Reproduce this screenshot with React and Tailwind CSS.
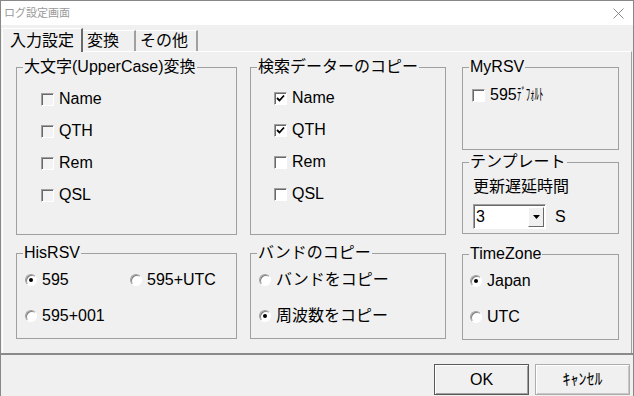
import React from 'react'

const font = { fontFamily: '"Liberation Sans", "Noto Sans CJK JP", sans-serif' }

const Check = ({ checked, dim }) => (
  <span
    className={`w-[13px] h-[13px] shrink-0 flex items-center justify-center border border-t-[#a0a0a0] border-l-[#a0a0a0] border-r-white border-b-white shadow-[inset_1px_1px_0_#696969] ${dim ? 'bg-[#f4f4f4]' : 'bg-white'}`}
  >
    {checked && (
      <svg width="9" height="9" viewBox="0 0 9 9">
        <path d="M1 4 L3.5 6.5 L8 1.5" stroke="#000" strokeWidth="1.8" fill="none" />
      </svg>
    )}
  </span>
)

const Radio = ({ on }) => (
  <span className="w-[12px] h-[12px] shrink-0 rounded-full bg-white border border-t-[#a0a0a0] border-l-[#a0a0a0] border-r-white border-b-white shadow-[inset_1px_1px_0_#808080] flex items-center justify-center">
    {on && <span className="w-[4px] h-[4px] rounded-full bg-black" />}
  </span>
)

const Group = ({ title, className, children }) => (
  <fieldset className={`border border-[#a0a0a0] px-0 ${className}`}>
    <legend className="ml-[6px] px-px text-[16px] leading-[18px] text-black">{title}</legend>
    {children}
  </fieldset>
)

const CheckRow = ({ label, checked, dim }) => (
  <div className="h-[32px] flex items-center gap-[5px]">
    <Check checked={checked} dim={dim} />
    <span className="text-[16px] leading-none">{label}</span>
  </div>
)

const RadioRow = ({ label, on }) => (
  <div className="h-[36px] flex items-center gap-[5px]">
    <Radio on={on} />
    <span className="text-[16px] leading-none">{label}</span>
  </div>
)

export default function App() {
  return (
    <div style={font} className="w-[634px] h-[396px] bg-[#f0f0f0] border-l border-t border-r border-[#888] flex flex-col overflow-hidden text-black">
      {/* title bar */}
      <div className="h-[24px] bg-white flex items-center justify-between pl-[3px] pr-[9px] shrink-0">
        <span className="text-[11px] text-[#9a9a9a]">ログ設定画面</span>
        <svg width="11" height="11" viewBox="0 0 11 11">
          <path d="M0.5 0.5 L10.5 10.5 M10.5 0.5 L0.5 10.5" stroke="#8a8a8a" strokeWidth="1" />
        </svg>
      </div>

      {/* tabs */}
      <div className="h-[26px] flex items-end px-[1px] shrink-0">
        <div className="h-[24px] w-[81px] flex items-center justify-center border-t border-l border-white border-r-2 border-r-[#696969] text-[16px] -mb-px bg-[#f0f0f0] relative">
          入力設定
        </div>
        <div className="h-[21px] w-[53px] flex items-center pl-[4px] border-t border-white border-r-2 border-r-[#a0a0a0] text-[16px]">
          変換
        </div>
        <div className="h-[21px] w-[62px] flex items-center pl-[4px] border-t border-white border-r-2 border-r-[#a0a0a0] text-[16px]">
          その他
        </div>
      </div>

      {/* page */}
      <div className="h-[302px] mx-px border-t border-l border-white border-r border-r-[#a0a0a0] pl-[13px] pt-[6px] flex shrink-0">
        <div className="w-[221px] flex flex-col">
          <Group title="大文字(UpperCase)変換" className="h-[177px]">
            <div className="pl-[24px] pt-[7px]">
              <CheckRow label="Name" dim />
              <CheckRow label="QTH" dim />
              <CheckRow label="Rem" dim />
              <CheckRow label="QSL" dim />
            </div>
          </Group>
          <Group title="HisRSV" className="h-[95px] mt-[9px]">
            <div className="pl-[8px] grid grid-cols-[105px_auto]">
              <RadioRow label="595" on />
              <RadioRow label="595+UTC" />
              <RadioRow label="595+001" />
            </div>
          </Group>
        </div>

        <div className="w-[196px] ml-[13px] flex flex-col">
          <Group title="検索データーのコピー" className="h-[177px]">
            <div className="pl-[23px] pt-[6px]">
              <CheckRow label="Name" checked />
              <CheckRow label="QTH" checked />
              <CheckRow label="Rem" />
              <CheckRow label="QSL" />
            </div>
          </Group>
          <Group title="バンドのコピー" className="h-[95px] mt-[9px]">
            <div className="pl-[8px]">
              <RadioRow label="バンドをコピー" />
              <RadioRow label="周波数をコピー" on />
            </div>
          </Group>
        </div>

        <div className="w-[157px] ml-[16px] flex flex-col">
          <Group title="MyRSV" className="h-[92px]">
            <div className="pl-[9px] pt-[3px]">
              <div className="h-[32px] flex items-center gap-[5px]">
                <Check />
                <span className="text-[16px] leading-none whitespace-nowrap">
                  595<span className="inline-block origin-left scale-x-[0.55]">ﾃﾞﾌｫﾙﾄ</span>
                </span>
              </div>
            </div>
          </Group>
          <Group title="テンプレート" className="h-[81px] mt-[3px]">
            <div className="pl-[10px] pt-[6px]">
              <div className="h-[20px] flex items-center text-[16px]">更新遅延時間</div>
              <div className="mt-[7px] flex items-center">
                <div className="w-[73px] h-[25px] bg-white border border-t-[#a0a0a0] border-l-[#a0a0a0] border-r-white border-b-white shadow-[inset_1px_1px_0_#696969] flex items-center justify-between pl-[2px] pr-px">
                  <span className="text-[16px] leading-none">3</span>
                  <span className="w-[16px] h-[20px] bg-[#f0f0f0] border border-t-white border-l-white border-r-[#696969] border-b-[#696969] flex items-center justify-center">
                    <svg width="7" height="4" viewBox="0 0 7 4">
                      <path d="M0 0 H7 L3.5 4 Z" fill="#000" />
                    </svg>
                  </span>
                </div>
                <span className="ml-[9px] text-[16px]">S</span>
              </div>
            </div>
          </Group>
          <Group title="TimeZone" className="h-[95px] mt-[11px]">
            <div className="pl-[7px]">
              <RadioRow label="Japan" on />
              <RadioRow label="UTC" />
            </div>
          </Group>
        </div>
      </div>

      {/* footer */}
      <div className="flex-1 border-t-2 border-t-[#8a8a8a] flex justify-end items-start gap-[6px] pt-[9px] pr-[3px]">
        <button className="w-[95px] h-[31px] bg-[#f0f0f0] border border-[#5a5a5a] shadow-[inset_1px_1px_0_#fff,inset_-1px_-1px_0_#a0a0a0] text-[16px]">
          OK
        </button>
        <button className="w-[95px] h-[31px] bg-[#f0f0f0] border border-[#adadad] shadow-[inset_1px_1px_0_#fff,inset_-1px_-1px_0_#c8c8c8] text-[16px]">
          ｷｬﾝｾﾙ
        </button>
      </div>
    </div>
  )
}
